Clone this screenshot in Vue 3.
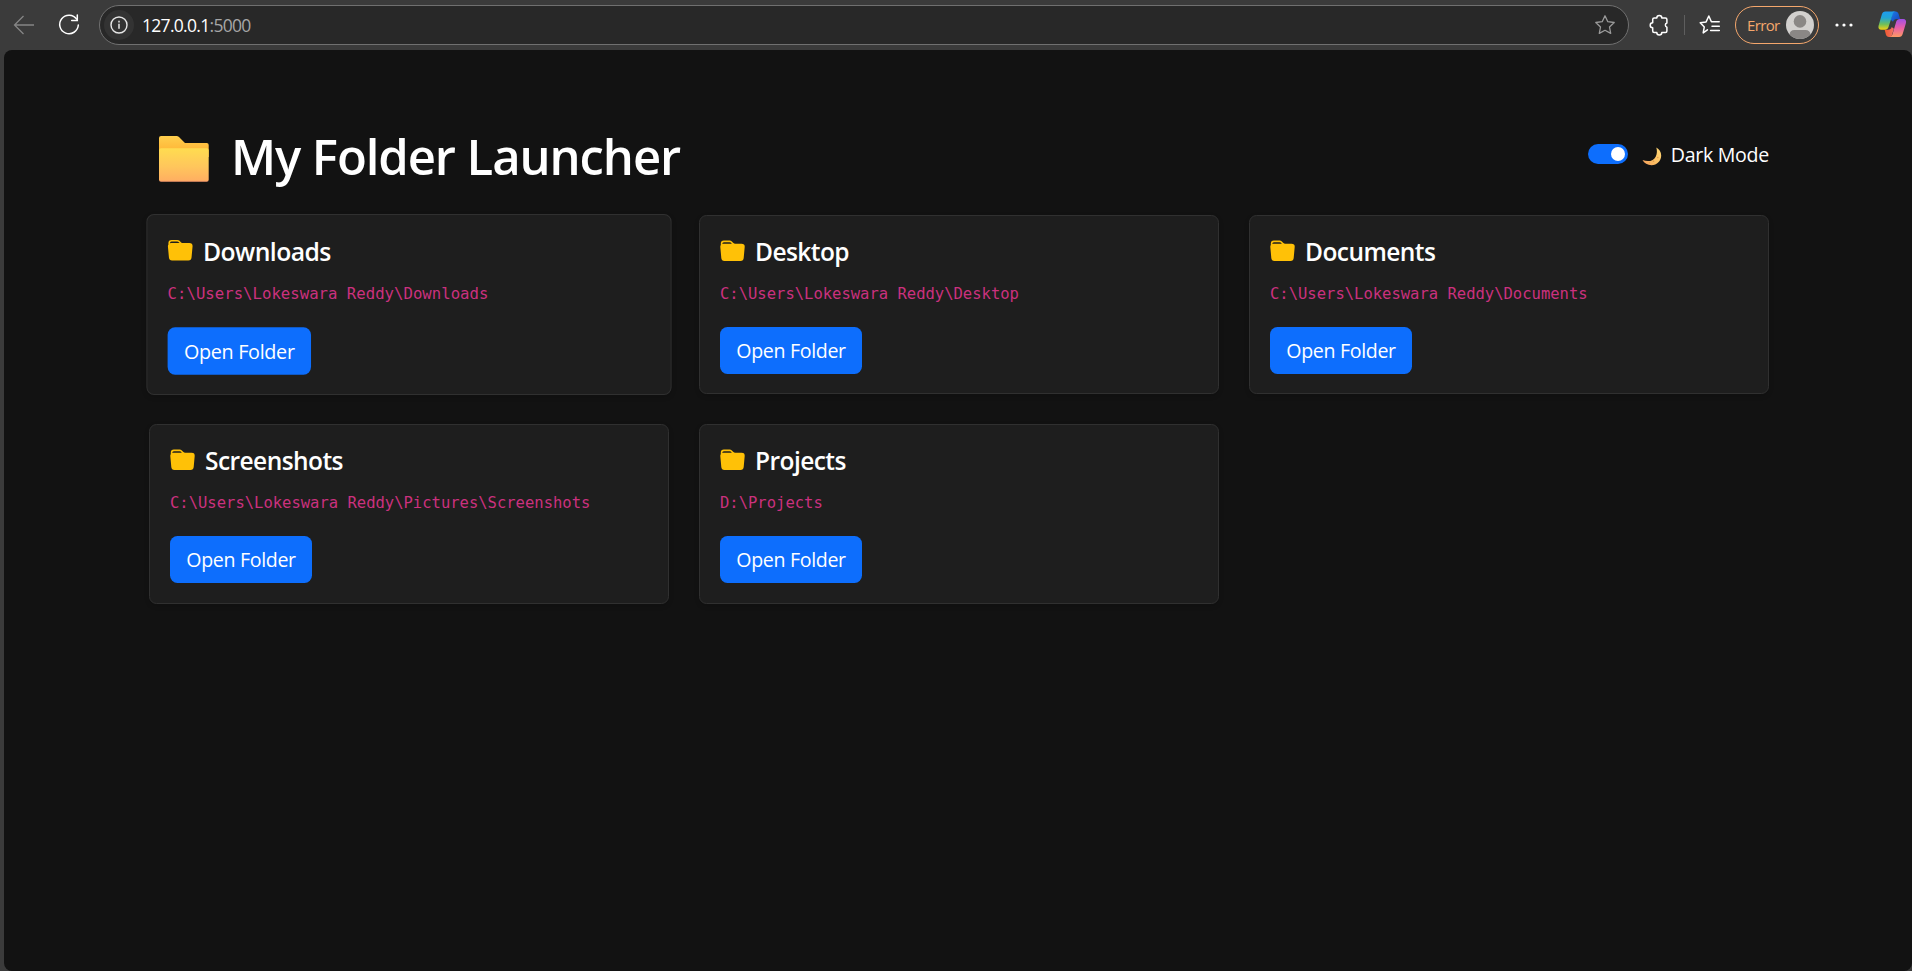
<script setup>
import { ref } from 'vue'

const dark = ref(true)
const folders = [
  { name: 'Downloads', path: 'C:\\Users\\Lokeswara Reddy\\Downloads', raised: true },
  { name: 'Desktop', path: 'C:\\Users\\Lokeswara Reddy\\Desktop' },
  { name: 'Documents', path: 'C:\\Users\\Lokeswara Reddy\\Documents' },
  { name: 'Screenshots', path: 'C:\\Users\\Lokeswara Reddy\\Pictures\\Screenshots' },
  { name: 'Projects', path: 'D:\\Projects' },
]
</script>

<template>
  <div class="window">
    <header class="toolbar">
      <svg class="back" viewBox="0 0 22 22" fill="none" stroke="#858585" stroke-width="1.3">
        <path d="M21 11H1.5M10.5 2L1.5 11l9 9" />
      </svg>
      <svg class="reload" viewBox="0 0 22 22" fill="none" stroke="#fff" stroke-width="1.5">
        <path d="M18.7 5.2A9.3 9.3 0 1 0 20.3 11" stroke-linecap="round" />
        <path d="M19.3 1v5.4h-5.6" stroke-linecap="round" />
      </svg>
      <div class="address">
        <span class="info">
          <svg viewBox="0 0 18 18" fill="none" stroke="#e6e6e6" stroke-width="1.4">
            <circle cx="9" cy="9" r="8" />
            <path d="M9 7.8v5M9 4.8v1.6" stroke-width="1.5" />
          </svg>
        </span>
        <span class="url">127.0.0.1<span class="port">:5000</span></span>
        <svg class="star" viewBox="0 0 22 22" fill="none" stroke="#9a9a9a" stroke-width="1.3" stroke-linejoin="round">
          <path d="M11 1.8l2.8 5.900 6.400.8-4.700 4.500 1.200 6.400L11 16.300l-5.700 3.100 1.200-6.400L1.800 8.500l6.400-.8z" />
        </svg>
      </div>
      <svg class="puzzle" viewBox="0 0 20 22" fill="none" stroke="#fff" stroke-width="1.500" stroke-linejoin="round">
        <path d="M5.200 3.900h2.600a2.500 2.500 0 0 1 5 0h3.600a1.500 1.500 0 0 1 1.500 1.500v3.600a2.200 2.200 0 0 0 0 4.200v3.700a1.500 1.500 0 0 1-1.500 1.500h-3.600a2.500 2.500 0 0 1-5 0H5.200a1.500 1.500 0 0 1-1.500-1.500v-3.200a2.500 2.500 0 0 1 0-5V5.400a1.500 1.500 0 0 1 1.500-1.500z" />
      </svg>
      <i class="divider"></i>
      <svg class="favorites" viewBox="0 0 22 22" fill="none" stroke="#fff" stroke-width="1.5" stroke-linejoin="round" stroke-linecap="round">
        <path d="M8.4 15.8L4.2 18.9l1.1-6L1.2 8.7l5.9-.8L9.8 2l2.6 5.8h7.8M13 12.3h7.3M11.6 16.6h8.7" />
      </svg>
      <div class="profile">
        <span>Error</span>
        <svg viewBox="0 0 28 28">
          <clipPath id="avatar-clip"><circle cx="14" cy="14" r="14" /></clipPath>
          <g clip-path="url(#avatar-clip)">
            <rect width="28" height="28" fill="#d2d0ce" />
            <circle cx="14" cy="10.4" r="6.3" fill="#8a8785" />
            <path d="M3.5 28v-4.500a5 5 0 0 1 5-4.500h11a5 5 0 0 1 5 4.500V28z" fill="#8a8785" />
          </g>
        </svg>
      </div>
      <svg class="dots" viewBox="0 0 18 4" fill="#fff">
        <circle cx="2" cy="2" r="1.600" /><circle cx="9" cy="2" r="1.600" /><circle cx="16" cy="2" r="1.600" />
      </svg>
      <svg class="copilot" viewBox="0 0 29 27">
        <defs>
          <linearGradient id="cp-left" x1="0" y1="0" x2="0" y2="1">
            <stop offset="0" stop-color="#1d9cf0" /><stop offset=".35" stop-color="#22a6d4" />
            <stop offset=".7" stop-color="#6fbf5a" /><stop offset="1" stop-color="#f5d112" />
          </linearGradient>
          <linearGradient id="cp-right" x1="0" y1="0" x2="0" y2="1">
            <stop offset="0" stop-color="#a04fe6" /><stop offset=".5" stop-color="#ea5fa6" />
            <stop offset="1" stop-color="#fd9a62" />
          </linearGradient>
          <linearGradient id="cp-top" x1="0" y1="0" x2="1" y2="1">
            <stop offset="0" stop-color="#1b7fe8" /><stop offset="1" stop-color="#1a3fb8" />
          </linearGradient>
          <linearGradient id="cp-bottom" x1="0" y1="0" x2="1" y2="0">
            <stop offset="0" stop-color="#f0582e" /><stop offset="1" stop-color="#f2736a" />
          </linearGradient>
        </defs>
        <path d="M15 .5h2.800c1.700 0 2.700 1 3.200 2.600l1.500 5h-3.400c-2 0-3.200 1-3.800 2.800L13 9z" fill="url(#cp-top)" />
        <path d="M13.500 26.500h-2.300c-1.700 0-2.700-1-3.200-2.600L6.800 19h3.400c2 0 3.200-1 3.800-2.800l2.200 2z" fill="url(#cp-bottom)" />
        <path d="M7.600.5H18c-1.800 0-2.700 1.300-3.300 3.200l-4 12.700c-.6 1.900-1.800 2.700-3.700 2.700H3.400C.9 19.100-.1 17.200.6 14.700L3.800 3.800C4.500 1.600 5.600.5 7.600.5z" fill="url(#cp-left)" />
        <path d="M21.400 26.500H11.600c1.800 0 2.700-1.300 3.300-3.200l3.700-12.500c.6-1.900 1.800-2.700 3.700-2.700h3.300c2.500 0 3.500 1.900 2.800 4.400l-3.200 10.700c-.7 2.200-1.800 3.300-3.800 3.300z" fill="url(#cp-right)" />
      </svg>
    </header>

    <main class="page">
      <div class="container">
        <div class="heading">
          <h1>
            <svg class="big-folder" viewBox="0 0 50 46">
              <defs>
                <linearGradient id="fold-back" x1="0" y1="0" x2="0" y2="1">
                  <stop offset="0" stop-color="#ffcf4d" /><stop offset=".7" stop-color="#ffb638" />
                </linearGradient>
                <linearGradient id="fold-front" x1="0" y1="0" x2="0" y2="1">
                  <stop offset="0" stop-color="#ffdc50" /><stop offset=".55" stop-color="#ffc65c" />
                  <stop offset=".95" stop-color="#ffb061" /><stop offset="1" stop-color="#f99a6c" />
                </linearGradient>
              </defs>
              <path d="M2 0h15.500c1 0 1.800.3 2.500 1l6 6h21.700A2 2 0 0 1 49.700 9v12H0V2a2 2 0 0 1 2-2z" fill="url(#fold-back)" />
              <path d="M2 12.300h45.700a2 2 0 0 1 2 2V43.700a2 2 0 0 1-2 2H2a2 2 0 0 1-2-2V14.300a2 2 0 0 1 2-2z" fill="url(#fold-front)" />
            </svg>
            <span>My Folder Launcher</span>
          </h1>
          <label class="mode" @click="dark = !dark">
            <span class="switch" :class="{ on: dark }"><i></i></span>
            <svg class="moon" viewBox="0 0 20 19">
              <defs>
                <linearGradient id="moon-fill" x1="1" y1="0" x2="0" y2="1">
                  <stop offset="0" stop-color="#ffd976" /><stop offset=".6" stop-color="#fcbd62" />
                  <stop offset="1" stop-color="#f39a5b" />
                </linearGradient>
              </defs>
              <path d="M14.300.4c3 1.600 4.900 4.600 4.900 8.100 0 5.300-4.200 9.700-9.700 9.700-3.900 0-7.300-2-9-5.200 5.800 2.200 11.200 1 13.300-3.600 1.400-3 1.400-6 .5-9z" fill="url(#moon-fill)" />
              <g fill="#dd964c"><circle cx="15.800" cy="10.500" r=".7" /><circle cx="11.500" cy="14.300" r=".8" /><circle cx="7.500" cy="15.800" r=".5" /></g>
            </svg>
            <span class="mode-text">Dark Mode</span>
          </label>
        </div>

        <div class="grid">
          <section v-for="f in folders" :key="f.name" class="card" :class="{ raised: f.raised }">
            <h5>
              <svg viewBox="0 0 16 16" fill="#ffc107">
                <path d="M9.828 3h3.982a2 2 0 0 1 1.992 2.181l-.637 7A2 2 0 0 1 13.174 14H2.825a2 2 0 0 1-1.991-1.819l-.637-7a2 2 0 0 1 .342-1.310L.5 3a2 2 0 0 1 2-2h3.672a2 2 0 0 1 1.414.586l.828.828A2 2 0 0 0 9.828 3m-8.322.120q.322-.119.684-.120h5.396l-.707-.707A1 1 0 0 0 6.172 2H2.500a1 1 0 0 0-1 .981z" />
              </svg>
              <span>{{ f.name }}</span>
            </h5>
            <code>{{ f.path }}</code>
            <button type="button">Open Folder</button>
          </section>
        </div>
      </div>
    </main>
  </div>
</template>

<style>
body {
  margin: 0;
  overflow: hidden;
}
</style>

<style scoped>
.window {
  box-sizing: border-box;
  display: flex;
  flex-direction: column;
  height: 971px;
  padding-left: 4px;
  background: #3b3b3b;
  color: #fff;
  font-family: "Open Sans", "Noto Sans", sans-serif;
}
svg { display: block; flex: none; overflow: visible; }

.toolbar {
  display: flex;
  align-items: center;
  flex: none;
  height: 50px;
  box-sizing: border-box;
  padding: 0 0 1px 9px;
}
.back { width: 22px; height: 22px; }
.reload { width: 22px; height: 22px; margin-left: 23px; }
.address {
  display: flex;
  align-items: center;
  box-sizing: border-box;
  width: 1530px;
  height: 40px;
  margin-left: 19px;
  padding: 0 12px 0 4px;
  border: 1px solid #707070;
  border-radius: 20px;
  background: #282828;
}
.info {
  display: flex;
  align-items: center;
  justify-content: center;
  width: 30px;
  height: 30px;
  border-radius: 50%;
  background: #333;
}
.info svg { width: 18px; height: 18px; }
.url {
  margin-left: 8px;
  font-size: 17.5px;
  line-height: 24px;
  letter-spacing: -0.7px;
}
.port { color: #a6a6a6; }
.star { width: 22px; height: 22px; margin-left: auto; }
.puzzle { width: 20px; height: 22px; margin-left: 20px; }
.divider { width: 1px; height: 20px; margin-left: 15px; background: #5e5e5e; }
.favorites { width: 22px; height: 22px; margin-left: 14px; }
.profile {
  display: flex;
  align-items: center;
  justify-content: space-between;
  box-sizing: border-box;
  width: 84px;
  height: 38px;
  margin-left: 14px;
  padding: 0 4px 0 11px;
  border: 1.500px solid #f5a76c;
  border-radius: 19px;
  color: #f5a76c;
  font-size: 15px;
  letter-spacing: -0.65px;
}
.profile svg { width: 28px; height: 28px; }
.dots { width: 18px; height: 4px; margin-left: 16px; }
.copilot { width: 28.500px; height: 26.500px; margin-left: 25px; }

.page {
  flex: 1;
  box-sizing: border-box;
  padding-top: 75px;
  border-radius: 8px;
  background: #121212;
}
.container { width: 1620px; margin-left: 145px; }
.heading {
  display: flex;
  align-items: center;
  justify-content: space-between;
  height: 60px;
  margin-bottom: 30px;
}
h1 {
  display: flex;
  align-items: center;
  margin: 0;
  font-size: 49px;
  font-weight: 600;
  line-height: 60px;
  letter-spacing: -1.080px;
  white-space: nowrap;
}
h1 span { margin-top: 2px; }
.big-folder { width: 50px; height: 46px; margin: 8px 22.500px 0 9.500px; }
.mode { display: flex; align-items: center; margin-bottom: 2px; }
.switch {
  display: flex;
  align-items: center;
  box-sizing: border-box;
  width: 40px;
  height: 20px;
  padding: 0 3px;
  border-radius: 10px;
  background: #555;
}
.switch.on { justify-content: flex-end; background: #0d6efd; }
.switch i { width: 14px; height: 14px; border-radius: 50%; background: #fff; }
.moon { width: 20px; height: 19px; margin: 4px 0 0 14px; }
.mode-text {
  margin: 1px 0 0 9px;
  font-size: 19.600px;
  line-height: 30px;
  letter-spacing: -0.3px;
}

.grid {
  display: grid;
  grid-template-columns: repeat(3, 520px);
  gap: 30px;
}
.card {
  box-sizing: border-box;
  height: 179.300px;
  padding: 20px;
  border: 1px solid #303030;
  border-radius: 7.500px;
  background: #1e1e1e;
  box-shadow: 0 2px 5px rgba(0, 0, 0, 0.15);
}
.card.raised { transform: scale(1.01); }
h5 {
  display: flex;
  align-items: center;
  gap: 10px;
  margin: 0;
  font-size: 24.500px;
  font-weight: 600;
  line-height: 30px;
  letter-spacing: -0.56px;
}
h5 span { margin-top: 1px; margin-bottom: -1px; }
h5 svg { width: 25px; height: 25px; }
code {
  display: block;
  margin-top: 13px;
  color: #cb317e;
  font-family: "DejaVu Sans Mono", monospace;
  font-size: 15.520px;
  line-height: 30px;
  white-space: nowrap;
}
button {
  display: block;
  width: 142px;
  height: 47px;
  margin-top: 17.500px;
  padding: 0;
  border: 0;
  border-radius: 7.500px;
  background: #0d6efd;
  color: #fff;
  font-family: inherit;
  font-size: 19.600px;
  letter-spacing: -0.33px;
}
</style>
